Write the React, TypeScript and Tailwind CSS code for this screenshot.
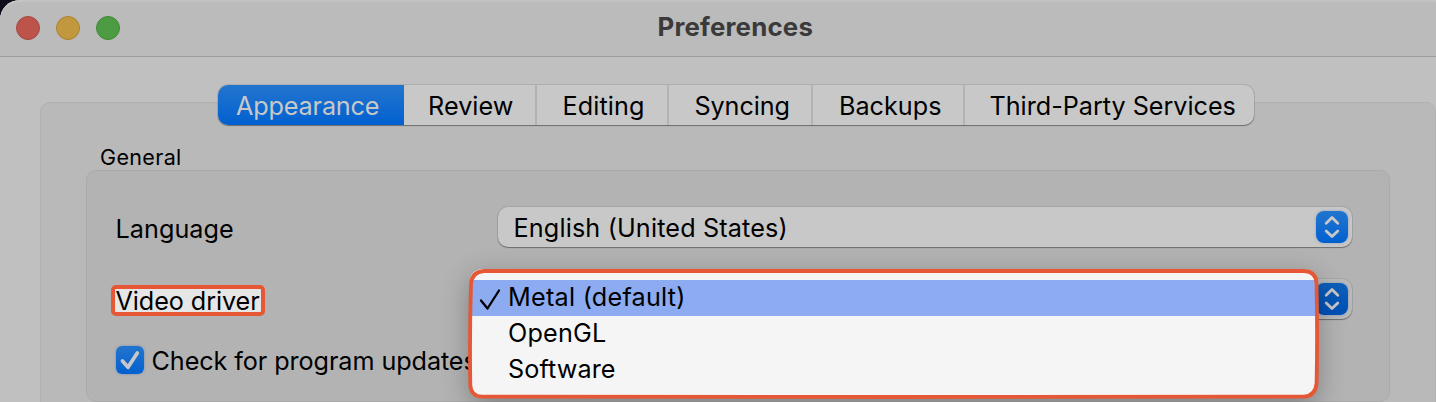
import { ReactNode } from "react";

const tabs = [
  { label: "Review", cls: "w-[133px] pl-[24px] tracking-[0.05px]" },
  { label: "Editing", cls: "w-[132px] pl-[25.5px] tracking-[0.1px]" },
  { label: "Syncing", cls: "w-[144px] pl-[25.5px] tracking-[-0.1px]" },
  { label: "Backups", cls: "w-[152px] pl-[26px] tracking-[0px]" },
];

function Stepper({ dark = false }: { dark?: boolean }) {
  return (
    <span
      className={`flex h-8 w-8 shrink-0 rounded-[8px] bg-linear-to-b shadow-[0_0_3px_rgba(40,90,170,0.35)] ${
        dark ? "from-[#0d5fb8] to-[#004fb8]" : "from-[#2275ce] to-[#0060d0]"
      }`}
    >
      <svg width="32" height="32" viewBox="0 0 32 32" fill="none" stroke="#c8c8c8" strokeWidth="2.8" strokeLinecap="round" strokeLinejoin="round">
        <path d="M10.2 12.3 16 6.6l5.8 5.7M10.2 19.9l5.8 5.7 5.8-5.7" />
      </svg>
    </span>
  );
}

function Select({ children, dark = false }: { children?: ReactNode; dark?: boolean }) {
  return (
    <div
      className={`flex h-10 w-[854px] items-center justify-between rounded-[10px] pr-1 pl-[15.5px] shadow-[0_0_0_1px_rgba(0,0,0,0.07),0_1px_1px_rgba(0,0,0,0.35)] ${
        dark ? "bg-[#bababa]" : "bg-[#c8c8c8]"
      }`}
    >
      <span className="pt-[2px] tracking-[0.15px]">{children}</span>
      <Stepper dark={dark} />
    </div>
  );
}

export default function App() {
  return (
    <div className="h-[402px] w-[1436px] overflow-hidden bg-[#100c1c] font-['Inter',sans-serif] text-[25.2px] leading-[36px] whitespace-nowrap text-black">
      <div className="flex h-full flex-col rounded-tl-[20px] bg-[#c0c0c0]">
        <header className="relative flex h-[57px] shrink-0 items-center rounded-tl-[20px] border-b border-[#9d9d9d] bg-[#bbbbbb] pl-4 shadow-[inset_0_2px_1px_#c4c4c4]">
          <div className="flex gap-4">
            <i className="h-6 w-6 rounded-full border border-[#a94640] bg-[#bc544b]" />
            <i className="h-6 w-6 rounded-full border border-[#ac8133] bg-[#c1983e]" />
            <i className="h-6 w-6 rounded-full border border-[#3f8a34] bg-[#4d9c43]" />
          </div>
          <h1 className="ml-[537.5px] pb-[2px] text-[25.8px] font-bold tracking-[0.2px] text-[#3a3a3a]">Preferences</h1>
        </header>

        <main className="pt-[45px] pl-10">
          <section className="h-[320px] rounded-t-[10px] border border-[#b0b0b0] bg-[#b9b9b9] pl-[45px]">
            <nav className="-mt-[18px] ml-[132px] flex h-10 w-[1036px] items-center rounded-[10px] bg-[#c8c8c8] shadow-[0_0_0_1px_rgba(0,0,0,0.09),0_1px_1px_rgba(0,0,0,0.35)]">
              <span className="flex h-10 w-[186px] items-center rounded-l-[10px] bg-linear-to-b from-[#2275ce] to-[#0060d0] pt-[2px] pl-[18px] tracking-[-0.15px] text-[#c8c8c8]">
                Appearance
              </span>
              {tabs.map((t) => (
                <span key={t.label} className={`flex h-10 items-center border-r-2 border-[#b3b3b3] pt-[2px] ${t.cls}`}>
                  {t.label}
                </span>
              ))}
              <span className="pt-[2px] pl-[24.5px] tracking-[-0.02px]">Third-Party Services</span>
            </nav>

            <h2 className="mt-[16px] h-[29px] pl-[14px] text-[21.5px] leading-[33px] tracking-[0.35px]">General</h2>

            <div className="h-[232px] w-[1304px] rounded-[10px] border border-[#aaaaaa] bg-[#b3b3b3] pt-9 pl-[29px]">
              <div className="flex h-10 items-center">
                <span className="-ml-[0.5px] w-[382.5px] pt-[4px] tracking-[0.05px]">Language</span>
                <Select>English (United States)</Select>
              </div>

              <div className="relative mt-8 flex h-10 items-center">
                <div className="mt-[2px] -ml-[5px] flex h-[31px] w-[154px] items-center rounded-[5px] border-4 border-[#e65835] bg-[#e6e6e6] pl-[0.5px]">
                  <span className="pt-[2px] tracking-[-0.08px]">Video driver</span>
                </div>
                <div className="ml-[233px]">
                  <Select dark />
                </div>

                <div className="absolute -top-[10px] left-[352px] h-[130px] w-[851px]">
                  <ul className="mx-[2px] h-[129px] rounded-[12px] bg-[#f5f5f5] pt-[11px] shadow-[0_8px_28px_rgba(0,0,0,0.3)]">
                    <li className="flex h-9 items-center bg-[#8cabf0] pl-2">
                      <svg className="mt-1" width="26" height="26" viewBox="0 0 26 26" fill="none" stroke="#000" strokeWidth="2.3" strokeLinecap="round" strokeLinejoin="round">
                        <path d="m3 13.5 6.5 8L21 3.5" />
                      </svg>
                      <span className="-mt-[2px] ml-1 tracking-[0.25px]">Metal (default)</span>
                    </li>
                    <li className="-mt-px h-9 pl-[38px] tracking-[0.2px]">OpenGL</li>
                    <li className="h-9 pl-[38px] tracking-[0.1px]">Software</li>
                  </ul>
                  <svg className="absolute inset-0" width="851" height="130" viewBox="0 0 851 130" fill="none" stroke="#e65835" strokeWidth="3.8">
                    <path d="M16 2H836Q848 2.500 848.500 14Q849.600 64 848.600 114Q847.500 127 836 127.700L425 128L14 127.700Q3 127.500 2.300 116Q1.500 65 3 15Q4 2.700 16 2Z" />
                  </svg>
                </div>
              </div>

              <label className="mt-[27px] flex h-7 items-center">
                <span className="flex h-7 w-7 rounded-[6px] bg-linear-to-b from-[#2275ce] to-[#0060d0] shadow-[0_0_3px_rgba(40,90,170,0.4)]">
                  <svg width="28" height="28" viewBox="0 0 28 28" fill="none" stroke="#c8c8c8" strokeWidth="3.7" strokeLinecap="round" strokeLinejoin="round">
                    <path d="m6.5 15 5.5 6.3L21.3 7" />
                  </svg>
                </span>
                <span className="ml-[7.5px] pt-[2px] tracking-[-0.08px]">Check for program updates</span>
              </label>
            </div>
          </section>
        </main>
      </div>
    </div>
  );
}
